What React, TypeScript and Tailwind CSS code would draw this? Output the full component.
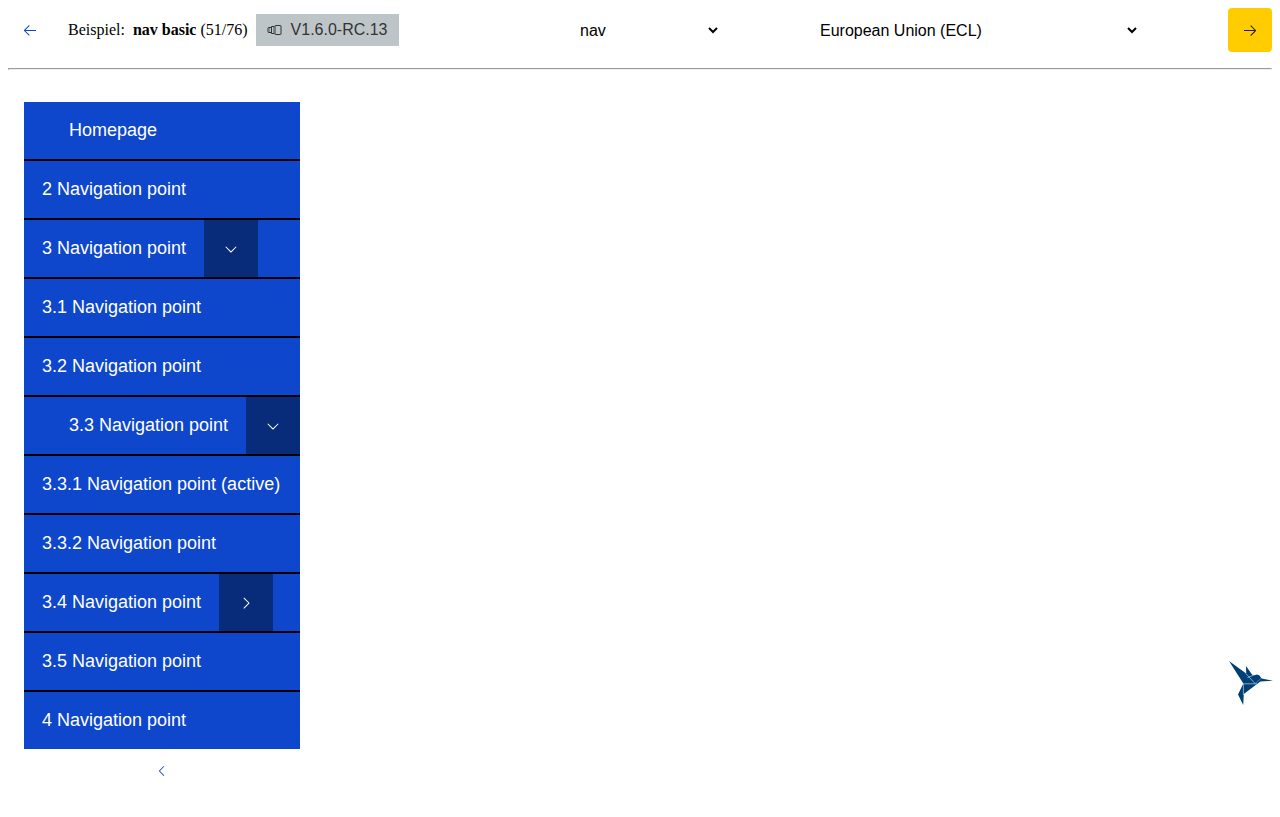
import { useState } from 'react';
import {
  VscArrowLeft,
  VscArrowRight,
  VscChevronDown,
  VscChevronLeft,
  VscChevronRight,
} from 'react-icons/vsc';

type Entry = {
  label: string;
  iconSpace?: boolean;
  expanded?: boolean;
};

const entries: Entry[] = [
  { label: 'Homepage', iconSpace: true },
  { label: '2 Navigation point' },
  { label: '3 Navigation point', expanded: true },
  { label: '3.1 Navigation point' },
  { label: '3.2 Navigation point' },
  { label: '3.3 Navigation point', iconSpace: true, expanded: true },
  { label: '3.3.1 Navigation point (active)' },
  { label: '3.3.2 Navigation point' },
  { label: '3.4 Navigation point', expanded: false },
  { label: '3.5 Navigation point' },
  { label: '4 Navigation point' },
];

function NavItem({ label, iconSpace, expanded }: Entry) {
  return (
    <li className="flex bg-[#0e47cb]">
      <a href="#nav" className={`py-4 pr-[18px] leading-[25px] ${iconSpace ? 'pl-[45px]' : 'pl-[18px]'}`}>
        {label}
      </a>
      {expanded !== undefined && (
        <button
          type="button"
          aria-label={`${expanded ? 'Collapse' : 'Expand'} ${label}`}
          aria-expanded={expanded}
          className="flex w-[54px] items-center justify-center bg-[#082b7a]"
        >
          {expanded ? <VscChevronDown size={18} /> : <VscChevronRight size={18} />}
        </button>
      )}
    </li>
  );
}

function VersionsIcon() {
  return (
    <svg viewBox="1 0 16 16" className="size-4" aria-hidden="true" fill="none" stroke="currentColor">
      <rect x="9" y="3.500" width="6" height="9" rx="0.500" />
      <path d="M8.500 4.500H5.500V11.500H8.500M5 5.500H2.500Q2 5.500 2 6V10Q2 10.500 2.500 10.500H5" />
      <path d="M3.500 5.500V10.500M7.500 4.500V11.500" opacity="0.400" />
    </svg>
  );
}

function Hummingbird() {
  return (
    <svg viewBox="0 0 44 44" className="size-11" aria-hidden="true">
      <path
        fill="#003f75"
        d="M0 0 17.200 12.500 17 5 23.200 13.800 25.500 14.200 28 13.600 30.500 14.500 32.500 17.500 44 19.700 31.500 20.500 28 23 14.800 33 14.200 44 9 33.500 14.300 22.500Z"
      />
      <path
        fill="none"
        stroke="#b9d2e4"
        strokeWidth="0.700"
        d="M16.800 12.500 26 22.500M18.500 16.500 25 14M14 22.800H28M14.400 23V34"
      />
      <path fill="none" stroke="#b9d2e4" strokeWidth="0.400" d="M26 22.500 32 17.500" />
    </svg>
  );
}

export default function App() {
  const [component, setComponent] = useState('nav');
  const [theme, setTheme] = useState('ecl');

  return (
    <div className="p-2 font-['Liberation_Sans',sans-serif] text-base text-black">
      <header className="flex h-11 items-center">
        <button
          type="button"
          aria-label="Previous example"
          className="flex size-11 items-center justify-center text-[#0e47cb]"
        >
          <VscArrowLeft size={16} />
        </button>
        <p className="ml-4 flex gap-2 whitespace-nowrap font-['Liberation_Serif',serif]">
          <span>Beispiel:</span>
          <span>
            <strong>nav basic</strong> (51/76)
          </span>
        </p>
        <span className="ml-2 flex h-8 items-center gap-2 whitespace-nowrap bg-[#bec5c9] px-[11px] text-[#333333]">
          <VersionsIcon />
          V1.6.0-RC.13
        </span>
        <div className="ml-auto flex items-center gap-[95px]">
          <select
            aria-label="Component"
            value={component}
            onChange={(event) => setComponent(event.target.value)}
            className="h-11 w-[145px] bg-white"
          >
            <option value="nav">nav</option>
          </select>
          <select
            aria-label="Theme"
            value={theme}
            onChange={(event) => setTheme(event.target.value)}
            className="h-11 w-[324px] bg-white"
          >
            <option value="ecl">European Union (ECL)</option>
          </select>
        </div>
        <button
          type="button"
          aria-label="Next example"
          className="ml-[88px] flex size-11 items-center justify-center rounded-[4px] bg-[#ffcc00] text-[#202020]"
        >
          <VscArrowRight size={16} />
        </button>
      </header>
      <hr className="mt-4 h-0.5 border border-t-[#9a9a9a] border-r-[#eeeeee] border-b-[#eeeeee] border-l-[#9a9a9a]" />
      <main className="p-4 pt-8">
        <div className="w-fit">
          <nav id="nav" aria-label="Main navigation" className="text-lg text-white">
            <ul className="flex flex-col gap-0.5 bg-black">
              {entries.map((entry) => (
                <NavItem key={entry.label} {...entry} />
              ))}
            </ul>
          </nav>
          <button
            type="button"
            aria-label="Minimise navigation"
            className="mx-auto flex size-11 items-center justify-center text-[#0e47cb]"
          >
            <VscChevronLeft size={16} />
          </button>
        </div>
      </main>
      <div className="fixed right-[7px] bottom-28">
        <Hummingbird />
      </div>
    </div>
  );
}
